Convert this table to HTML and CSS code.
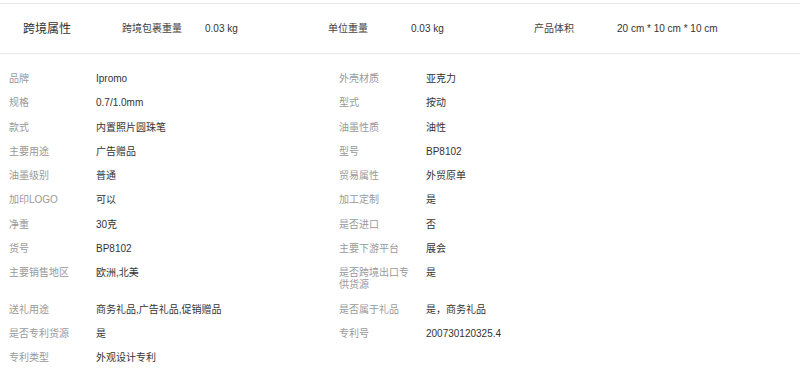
FILE: index.html
```html
<!DOCTYPE html>
<html lang="zh-CN">
<head>
<meta charset="utf-8">
<link rel="stylesheet" href="styles.css">
</head>
<body>
<div class="page">
  <div class="cross">
    <div class="cross-title">跨境属性</div>
    <div class="cross-item"><span class="cross-label">跨境包裹重量</span><span class="cross-value">0.03 kg</span></div>
    <div class="cross-item"><span class="cross-label">单位重量</span><span class="cross-value">0.03 kg</span></div>
    <div class="cross-item"><span class="cross-label">产品体积</span><span class="cross-value">20 cm * 10 cm * 10 cm</span></div>
  </div>
  <div class="attrs">
    <div class="attr"><span class="attr-label">品牌</span><span class="attr-value">Ipromo</span></div>
    <div class="attr"><span class="attr-label">外壳材质</span><span class="attr-value">亚克力</span></div>
    <div class="attr"><span class="attr-label">规格</span><span class="attr-value">0.7/1.0mm</span></div>
    <div class="attr"><span class="attr-label">型式</span><span class="attr-value">按动</span></div>
    <div class="attr"><span class="attr-label">款式</span><span class="attr-value">内置照片圆珠笔</span></div>
    <div class="attr"><span class="attr-label">油墨性质</span><span class="attr-value">油性</span></div>
    <div class="attr"><span class="attr-label">主要用途</span><span class="attr-value">广告赠品</span></div>
    <div class="attr"><span class="attr-label">型号</span><span class="attr-value">BP8102</span></div>
    <div class="attr"><span class="attr-label">油墨级别</span><span class="attr-value">普通</span></div>
    <div class="attr"><span class="attr-label">贸易属性</span><span class="attr-value">外贸原单</span></div>
    <div class="attr"><span class="attr-label">加印LOGO</span><span class="attr-value">可以</span></div>
    <div class="attr"><span class="attr-label">加工定制</span><span class="attr-value">是</span></div>
    <div class="attr"><span class="attr-label">净重</span><span class="attr-value">30克</span></div>
    <div class="attr"><span class="attr-label">是否进口</span><span class="attr-value">否</span></div>
    <div class="attr"><span class="attr-label">货号</span><span class="attr-value">BP8102</span></div>
    <div class="attr"><span class="attr-label">主要下游平台</span><span class="attr-value">展会</span></div>
    <div class="attr"><span class="attr-label">主要销售地区</span><span class="attr-value">欧洲,北美</span></div>
    <div class="attr"><span class="attr-label">是否跨境出口专供货源</span><span class="attr-value">是</span></div>
    <div class="attr"><span class="attr-label">送礼用途</span><span class="attr-value">商务礼品,广告礼品,促销赠品</span></div>
    <div class="attr"><span class="attr-label">是否属于礼品</span><span class="attr-value">是，商务礼品</span></div>
    <div class="attr"><span class="attr-label">是否专利货源</span><span class="attr-value">是</span></div>
    <div class="attr"><span class="attr-label">专利号</span><span class="attr-value">200730120325.4</span></div>
    <div class="attr"><span class="attr-label">专利类型</span><span class="attr-value">外观设计专利</span></div>
  </div>
</div>
</body>
</html>
```
FILE: styles.css
```css
html, body {
  margin: 0;
  padding: 0;
  background: #fff;
}
body {
  font-family: "Liberation Sans", Arial, "Noto Sans CJK SC", sans-serif;
  color: #333;
}
.page {
  padding-top: 3px;
}
.cross {
  display: flex;
  align-items: center;
  height: 49px;
  border-top: 1px solid #e8e8e8;
  border-bottom: 1px solid #e8e8e8;
  padding-left: 23px;
}
.cross-title {
  width: 99px;
  font-size: 12px;
  line-height: 14px;
  color: #333;
}
.cross-item {
  display: flex;
  align-items: center;
  width: 206px;
  font-size: 10px;
  line-height: 12px;
}
.cross-label {
  display: block;
  width: 83px;
  color: #444;
}
.cross-value {
  display: block;
  color: #333;
}
.attrs {
  display: grid;
  grid-template-columns: 330px 330px;
  padding-top: 13px;
}
.attr {
  display: flex;
  align-items: flex-start;
  padding: 6px 0 6px 9px;
  font-size: 10px;
  line-height: 12.25px;
}
.attr-label {
  width: 77px;
  margin-right: 10px;
  color: #999;
  flex-shrink: 0;
}
.attr-value {
  color: #333;
}
```
